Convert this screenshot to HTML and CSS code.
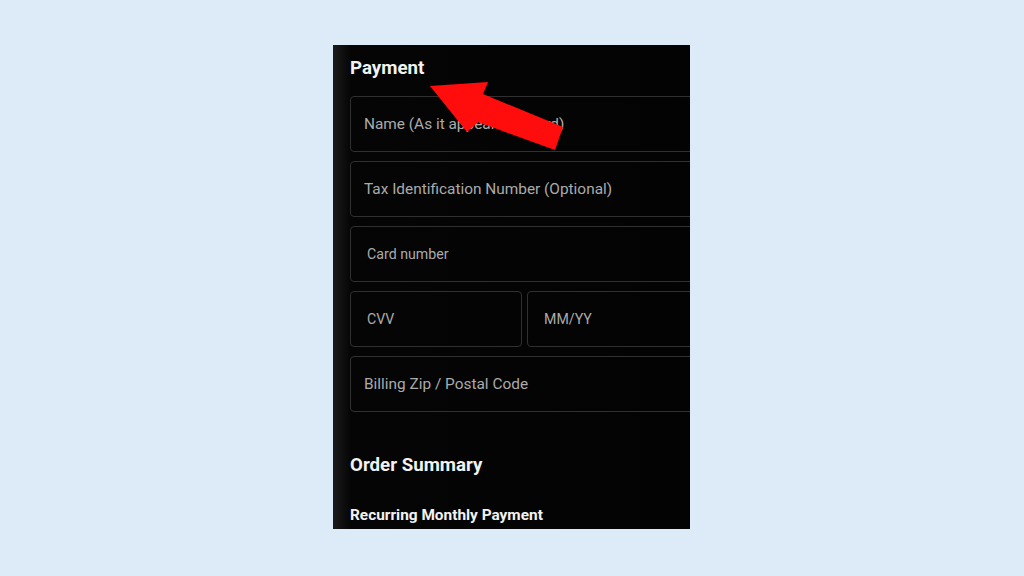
FILE: index.html
```html
<!DOCTYPE html>
<html lang="en">
<head>
    <meta charset="UTF-8">
    <meta name="viewport" content="width=device-width, initial-scale=1.0">
    <title>Payment</title>
    <link rel="stylesheet" href="styles.css">
</head>
<body>

    <div class="phone">
        <div class="checkout">
            <h2 class="section-title">Payment</h2>

            <div class="fields">
                <input type="text" class="field" placeholder="Name (As it appears on card)">
                <input type="text" class="field" placeholder="Tax Identification Number (Optional)">
                <input type="text" class="field field-small" placeholder="Card number">
                <div class="field-row">
                    <input type="text" class="field field-small cvv" placeholder="CVV">
                    <input type="text" class="field field-small" placeholder="MM/YY">
                </div>
                <input type="text" class="field" placeholder="Billing Zip / Postal Code">
            </div>

            <h2 class="section-title summary-title">Order Summary</h2>
            <p class="summary-line">Recurring Monthly Payment</p>
        </div>

        <!-- red annotation arrow pointing at the heading -->
        <svg class="arrow" viewBox="0 0 357 484" width="357" height="484">
            <polygon points="97,41 155,37 150,49 230,82 222,105 145,77 134,87" fill="#ff0d0d"/>
        </svg>
    </div>

</body>
</html>
```

FILE: styles.css
```css
body {
    margin: 0;
    height: 100vh;
    background: #ddebf9;
    display: flex;
    justify-content: center;
    align-items: center;
    font-family: Roboto, "Liberation Sans", sans-serif;
}
.phone {
    position: relative;
    width: 357px;
    height: 484px;
    margin: 0 1px 2px 0;
    overflow: hidden;
    background: linear-gradient(to right, #1b1b1b, #050505 18px, #030303);
    color: #f2f2f2;
}
.checkout {
    padding: 12px 0 0 17px;
    width: 380px;
}
.section-title {
    margin: 0;
    font-size: 18.7px;
    line-height: 22px;
    font-weight: 700;
}
.fields {
    display: flex;
    flex-direction: column;
    gap: 9px;
    margin-top: 17px;
}
.field {
    box-sizing: border-box;
    height: 56px;
    width: 100%;
    margin: 0;
    padding: 0 13px;
    background: transparent;
    border: 1px solid #303030;
    border-radius: 4px;
    font-family: inherit;
    font-size: 15.4px;
    color: #bbb;
}
.field::placeholder {
    color: #ababab;
}
.field-small {
    font-size: 14.2px;
    padding-left: 16px;
}
.field-row {
    display: flex;
    gap: 5px;
}
.field-row .field {
    flex: 1;
}
.field-row .cvv {
    flex: 0 0 172px;
}
.summary-title {
    margin-top: 42px;
}
.summary-line {
    margin: 30px 0 0;
    font-size: 15.4px;
    line-height: 18px;
    font-weight: 700;
}
.arrow {
    position: absolute;
    top: 0;
    left: 0;
}
```
